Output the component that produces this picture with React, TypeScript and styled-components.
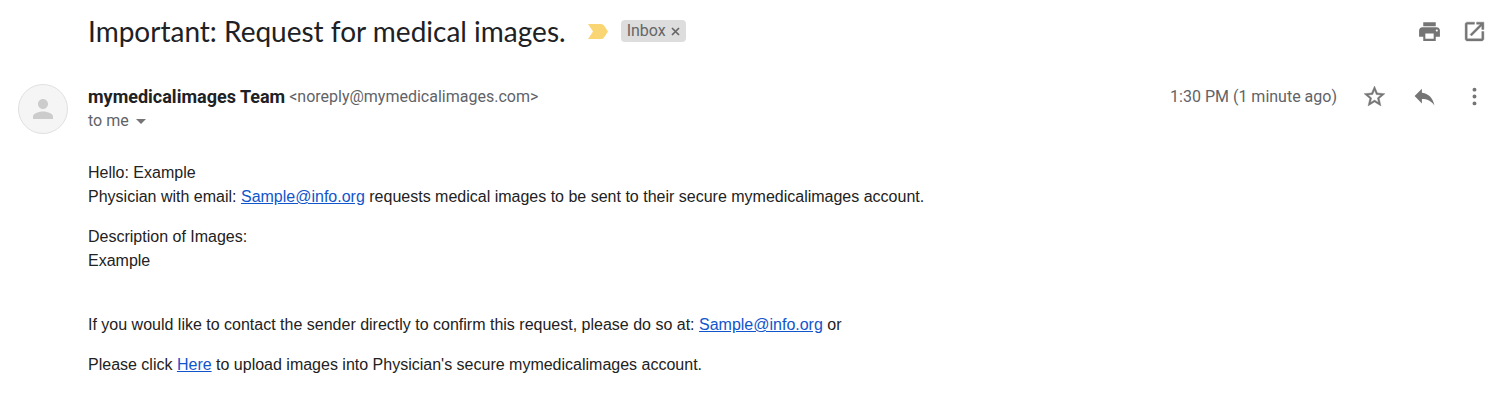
import React from "react";
import styled, { createGlobalStyle } from "styled-components";

const GlobalStyle = createGlobalStyle`
  * { box-sizing: border-box; }
  body {
    margin: 0;
    background: #fff;
    color: #202124;
    font-family: Roboto, "Liberation Sans", sans-serif;
  }
`;

const Page = styled.main`
  padding: 12px 16px 32px 18px;
`;

const SubjectRow = styled.header`
  display: flex;
  align-items: center;
  min-height: 38px;
  padding-left: 70px;
`;

const Subject = styled.h1`
  margin: 0;
  font: 400 28px/36px Lato, sans-serif;
`;

const ImportanceButton = styled.button`
  display: flex;
  margin-left: 22px;
  padding: 0;
  border: 0;
  background: none;
`;

const Label = styled.span`
  display: flex;
  align-items: center;
  height: 22px;
  margin-left: 13px;
  padding: 0 6px;
  gap: 5px;
  border-radius: 4px;
  background: #ddd;
  color: #666;
  font-size: 16px;
  line-height: 22px;
`;

const LabelRemove = styled.button`
  display: flex;
  padding: 0;
  border: 0;
  background: none;
  color: #666;
`;

const Actions = styled.div`
  display: flex;
  align-items: center;
  gap: 20px;
  margin-left: auto;
`;

const IconButton = styled.button`
  display: flex;
  align-items: center;
  justify-content: center;
  width: 25px;
  height: 25px;
  padding: 0;
  border: 0;
  background: none;
  color: #757575;
`;

const SenderRow = styled.section`
  display: flex;
  align-items: flex-start;
  gap: 20px;
  margin-top: 34px;
`;

const Avatar = styled.div`
  display: flex;
  align-items: center;
  justify-content: center;
  flex: none;
  width: 50px;
  height: 50px;
  border: 1px solid #e0e0e0;
  border-radius: 50%;
  background: #f5f5f5;
`;

const SenderLine = styled.div`
  display: flex;
  align-items: center;
  gap: 4px;
  line-height: 25px;
`;

const SenderName = styled.strong`
  font-size: 18px;
  font-weight: 700;
`;

const Muted = styled.span`
  color: #5f6368;
  font-size: 16px;
  line-height: 24px;
`;

const RecipientButton = styled.button`
  display: flex;
  align-items: center;
  gap: 7px;
  padding: 0;
  border: 0;
  background: none;
  color: #5f6368;
  font: 400 16px/24px Roboto, sans-serif;
`;

const MessageActions = styled(Actions)`
  gap: 25px;
`;

const Body = styled.article`
  padding: 27px 0 0 70px;
  color: #222;
  font: 400 16px/24px "Liberation Sans", sans-serif;
`;

const Paragraph = styled.p<{ $after?: number }>`
  margin: 0 0 ${({ $after = 16 }) => $after}px;
`;

const Link = styled.a`
  color: #15c;
`;

const Icon = ({ d, size = 25, weight = 0 }: { d: string; size?: number; weight?: number }) => (
  <svg
    width={size}
    height={size}
    viewBox="0 0 24 24"
    fill="currentColor"
    stroke="currentColor"
    strokeWidth={weight}
    aria-hidden="true"
  >
    <path d={d} />
  </svg>
);

const PRINT = "M19 8H5c-1.66 0-3 1.34-3 3v6h4v4h12v-4h4v-6c0-1.66-1.34-3-3-3zm-3 11H8v-5h8v5zm3-7c-.55 0-1-.45-1-1s.45-1 1-1 1 .45 1 1-.45 1-1 1zm-1-9H6v4h12V3z";
const OPEN = "M19 19H5V5h7V3H5c-1.11 0-2 .9-2 2v14c0 1.1.89 2 2 2h14c1.1 0 2-.9 2-2v-7h-2v7zM14 3v2h3.59l-9.83 9.83 1.41 1.41L19 6.41V10h2V3h-7z";
const STAR = "M22 9.24l-7.19-.62L12 2 9.19 8.63 2 9.24l5.46 4.73L5.82 21 12 17.27 18.18 21l-1.63-7.03L22 9.24zM12 15.4l-3.76 2.27 1-4.28-3.32-2.88 4.38-.38L12 6.1l1.71 4.04 4.38.38-3.32 2.88 1 4.28L12 15.4z";
const REPLY = "M9.5 8.3V4.6L2.500 11.600l7 7v-4.200c5 0 9 1.800 12 6.200-1-6.200-4.800-11.500-12-12.300z";
const MORE = "M12 3.500a1.900 1.900 0 1 0 0 3.800 1.900 1.900 0 0 0 0-3.800zm0 6.600a1.900 1.900 0 1 0 0 3.800 1.900 1.900 0 0 0 0-3.800zm0 6.600a1.900 1.900 0 1 0 0 3.800 1.900 1.900 0 0 0 0-3.800z";
const PERSON = "M12 12c2.21 0 4-1.79 4-4s-1.79-4-4-4-4 1.79-4 4 1.79 4 4 4zm0 2c-2.67 0-8 1.34-8 4v2h16v-2c0-2.66-5.33-4-8-4z";

const SenderPhoto = () => (
  <Avatar role="img" aria-label="mymedicalimages Team">
    <svg width="30" height="30" viewBox="0 0 24 24" fill="#ccc" aria-hidden="true">
      <path d={PERSON} />
    </svg>
  </Avatar>
);

export default function App() {
  return (
    <>
      <GlobalStyle />
      <Page>
        <SubjectRow>
          <Subject>Important: Request for medical images.</Subject>
          <ImportanceButton aria-label="Important">
            <svg width="20" height="15" viewBox="0 0 20 15" aria-hidden="true">
              <path d="M0 0h13q2 0 3 1.500L20 7.500 16 13.500q-1 1.500-3 1.500H0l5-7.500z" fill="#f9d673" />
            </svg>
          </ImportanceButton>
          <Label>
            Inbox
            <LabelRemove aria-label="Remove label Inbox">
              <svg width="9" height="9" viewBox="0 0 9 9" aria-hidden="true">
                <path d="M1 1l7 7M8 1L1 8" stroke="currentColor" strokeWidth="1.700" />
              </svg>
            </LabelRemove>
          </Label>
          <Actions>
            <IconButton aria-label="Print"><Icon d={PRINT} /></IconButton>
            <IconButton aria-label="Open in new window"><Icon d={OPEN} weight={0.4} /></IconButton>
          </Actions>
        </SubjectRow>
        <SenderRow>
          <SenderPhoto />
          <div>
            <SenderLine>
              <SenderName>mymedicalimages Team</SenderName>
              <Muted>&lt;noreply@mymedicalimages.com&gt;</Muted>
            </SenderLine>
            <RecipientButton>
              to me
              <svg width="10" height="5" viewBox="0 0 10 5" aria-hidden="true">
                <path d="M0 0h10L5 5z" fill="#757575" />
              </svg>
            </RecipientButton>
          </div>
          <MessageActions>
            <Muted>1:30 PM (1 minute ago)</Muted>
            <IconButton aria-label="Star"><Icon d={STAR} weight={0.4} /></IconButton>
            <IconButton aria-label="Reply"><Icon d={REPLY} /></IconButton>
            <IconButton aria-label="More"><Icon d={MORE} /></IconButton>
          </MessageActions>
        </SenderRow>
        <Body>
          <Paragraph>
            Hello: Example<br />
            Physician with email: <Link href="mailto:Sample@info.org">Sample@info.org</Link> requests medical images to be sent to their secure mymedicalimages account.
          </Paragraph>
          <Paragraph $after={40}>
            Description of Images:<br />
            Example
          </Paragraph>
          <Paragraph>
            If you would like to contact the sender directly to confirm this request, please do so at: <Link href="mailto:Sample@info.org">Sample@info.org</Link> or
          </Paragraph>
          <Paragraph>
            Please click <Link href="#upload">Here</Link> to upload images into Physician's secure mymedicalimages account.
          </Paragraph>
        </Body>
      </Page>
    </>
  );
}
